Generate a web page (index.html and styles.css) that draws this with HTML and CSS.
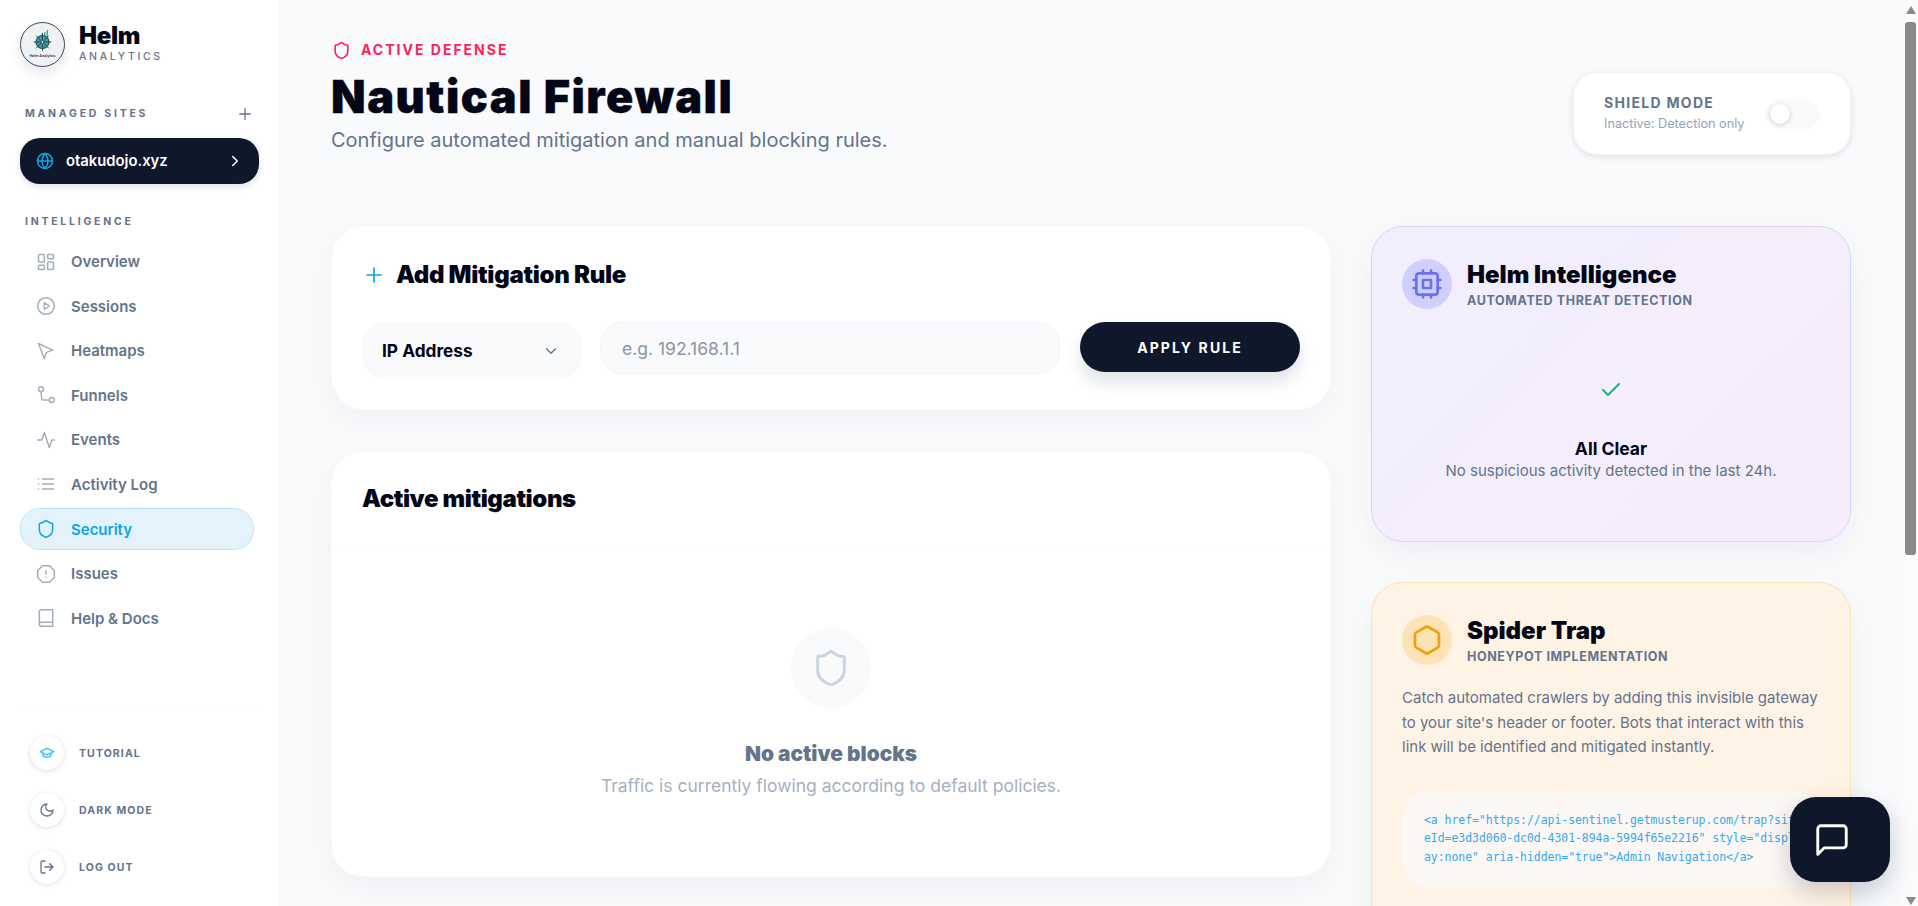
FILE: index.html
```html
<!DOCTYPE html>
<html lang="en">
<head>
<meta charset="utf-8">
<title>Nautical Firewall</title>
<link rel="stylesheet" href="styles.css">
</head>
<body>
<div class="app">
  <aside class="sidebar">
    <div class="brand">
      <div class="logo">
        <svg viewBox="0 0 43 43" width="43" height="43">
          <circle class="wheel-fill" cx="21.500" cy="19" r="7"/>
          <path class="wheel-bars" d="M23 13v-4h1.500v4zM25.500 14V7H27v7zM20.500 12v-2H22v2z"/>
          <g class="wheel-line">
            <circle cx="21.500" cy="19" r="6.500"/>
            <path d="M21.500 10.500v17M13 19h17M15.500 13l12 12M27.500 13l-12 12"/>
          </g>
          <circle class="wheel-hub" cx="21.500" cy="19" r="1.400"/>
          <text x="21.500" y="33.500" class="logo-text">Helm Analytics</text>
        </svg>
      </div>
      <div class="brand-text">
        <div class="brand-name">Helm</div>
        <div class="brand-sub">ANALYTICS</div>
      </div>
    </div>
    <div class="side-head">
      <span class="side-label">MANAGED SITES</span>
      <svg class="plus-icon" viewBox="0 0 24 24"><path d="M5 12h14M12 5v14"/></svg>
    </div>
    <div class="site-pill">
      <svg class="globe" viewBox="0 0 24 24"><circle cx="12" cy="12" r="10"/><path d="M2 12h20M12 2a15.300 15.300 0 0 1 4 10 15.300 15.300 0 0 1-4 10 15.300 15.300 0 0 1-4-10 15.300 15.300 0 0 1 4-10z"/></svg>
      <span class="site-name">otakudojo.xyz</span>
      <svg class="chev" viewBox="0 0 24 24"><path d="m9 18 6-6-6-6"/></svg>
    </div>
    <div class="side-label intel">INTELLIGENCE</div>
    <nav class="nav">
      <a class="nav-item"><svg viewBox="0 0 24 24"><rect x="3" y="3" width="7" height="9" rx="1"/><rect x="14" y="3" width="7" height="5" rx="1"/><rect x="14" y="12" width="7" height="9" rx="1"/><rect x="3" y="16" width="7" height="5" rx="1"/></svg>Overview</a>
      <a class="nav-item"><svg viewBox="0 0 24 24"><circle cx="12" cy="12" r="10"/><path d="m10 8 6 4-6 4z"/></svg>Sessions</a>
      <a class="nav-item"><svg viewBox="0 0 24 24"><path d="M3 3l7 18 2.600-7.400L20 11z"/></svg>Heatmaps</a>
      <a class="nav-item"><svg viewBox="0 0 24 24"><circle cx="6" cy="5" r="3"/><circle cx="19" cy="18" r="3"/><path d="M6 8l1 9a1.500 1.500 0 0 0 1.500 1H16"/></svg>Funnels</a>
      <a class="nav-item"><svg viewBox="0 0 24 24"><path d="M22 12h-3l-3 9-6-18-3 9H2"/></svg>Events</a>
      <a class="nav-item"><svg viewBox="0 0 24 24"><path d="M8 6h13M8 12h13M8 18h13M3 6h.01M3 12h.01M3 18h.01"/></svg>Activity Log</a>
      <a class="nav-item active"><svg viewBox="0 0 24 24"><path d="M20 13c0 5-3.500 7.500-7.660 8.950a1 1 0 0 1-.67-.01C7.500 20.500 4 18 4 13V6a1 1 0 0 1 1-1c2 0 4.500-1.200 6.240-2.720a1.170 1.170 0 0 1 1.520 0C14.510 3.810 17 5 19 5a1 1 0 0 1 1 1z"/></svg>Security</a>
      <a class="nav-item"><svg viewBox="0 0 24 24"><path d="M7.860 2h8.280L22 7.860v8.280L16.140 22H7.860L2 16.140V7.860z"/><path d="M12 8v4M12 16h.01"/></svg>Issues</a>
      <a class="nav-item"><svg viewBox="0 0 24 24"><path d="M4 19.500v-15A2.500 2.500 0 0 1 6.500 2H20v20H6.500a2.500 2.500 0 0 1 0-5H20"/></svg>Help &amp; Docs</a>
    </nav>
    <div class="side-foot">
      <div class="foot-item"><span class="foot-ic tut"><svg viewBox="0 0 24 24"><path d="M22 10 12 5 2 10l10 5zM6 12.500V16c3 3 9 3 12 0v-3.500"/></svg></span>TUTORIAL</div>
      <div class="foot-item"><span class="foot-ic"><svg viewBox="0 0 24 24"><path d="M12 3a6 6 0 0 0 9 9 9 9 0 1 1-9-9z"/></svg></span>DARK MODE</div>
      <div class="foot-item"><span class="foot-ic"><svg viewBox="0 0 24 24"><path d="M9 21H5a2 2 0 0 1-2-2V5a2 2 0 0 1 2-2h4M16 17l5-5-5-5M21 12H9"/></svg></span>LOG OUT</div>
    </div>
  </aside>

  <main class="main">
    <header class="page-head">
      <div class="titles">
        <div class="eyebrow"><svg viewBox="0 0 24 24"><path d="M20 13c0 5-3.500 7.500-7.660 8.950a1 1 0 0 1-.67-.01C7.500 20.500 4 18 4 13V6a1 1 0 0 1 1-1c2 0 4.500-1.200 6.240-2.720a1.170 1.170 0 0 1 1.520 0C14.510 3.810 17 5 19 5a1 1 0 0 1 1 1z"/></svg>ACTIVE DEFENSE</div>
        <h1 class="title">Nautical Firewall</h1>
        <p class="subtitle">Configure automated mitigation and manual blocking rules.</p>
      </div>
      <div class="shield">
        <div>
          <div class="shield-title">SHIELD MODE</div>
          <div class="shield-sub">Inactive: Detection only</div>
        </div>
        <div class="toggle"><span class="knob"></span></div>
      </div>
    </header>

    <div class="columns">
      <div class="col-left">
        <section class="card rule-card">
          <h2 class="card-title"><svg viewBox="0 0 24 24"><path d="M5 12h14M12 5v14"/></svg>Add Mitigation Rule</h2>
          <div class="rule-form">
            <div class="select">IP Address<svg viewBox="0 0 24 24"><path d="m6 9 6 6 6-6"/></svg></div>
            <div class="input">e.g. 192.168.1.1</div>
            <button class="apply">APPLY RULE</button>
          </div>
        </section>
        <section class="card block-card">
          <h2 class="block-head">Active mitigations</h2>
          <div class="empty">
            <div class="empty-ic"><svg viewBox="0 0 24 24"><path d="M20 13c0 5-3.500 7.500-7.660 8.950a1 1 0 0 1-.67-.01C7.500 20.500 4 18 4 13V6a1 1 0 0 1 1-1c2 0 4.500-1.200 6.240-2.720a1.170 1.170 0 0 1 1.520 0C14.510 3.810 17 5 19 5a1 1 0 0 1 1 1z"/></svg></div>
            <div class="empty-title">No active blocks</div>
            <div class="empty-sub">Traffic is currently flowing according to default policies.</div>
          </div>
        </section>
      </div>

      <div class="col-right">
        <section class="panel intel-panel">
          <div class="panel-head">
            <span class="panel-ic intel-ic"><svg viewBox="0 0 24 24"><rect x="4" y="4" width="16" height="16" rx="2"/><rect x="9" y="9" width="6" height="6"/><path d="M15 2v2M15 20v2M2 15h2M2 9h2M20 15h2M20 9h2M9 2v2M9 20v2"/></svg></span>
            <div>
              <div class="panel-title">Helm Intelligence</div>
              <div class="panel-sub">AUTOMATED THREAT DETECTION</div>
            </div>
          </div>
          <div class="clear">
            <span class="clear-ic"><svg viewBox="0 0 24 24"><path d="M20 6 9 17l-5-5"/></svg></span>
            <div class="clear-title">All Clear</div>
            <div class="clear-sub">No suspicious activity detected in the last 24h.</div>
          </div>
        </section>
        <section class="panel trap-panel">
          <div class="panel-head">
            <span class="panel-ic trap-ic"><svg viewBox="0 0 24 24"><path d="M21 16V8a2 2 0 0 0-1-1.730l-7-4a2 2 0 0 0-2 0l-7 4A2 2 0 0 0 3 8v8a2 2 0 0 0 1 1.730l7 4a2 2 0 0 0 2 0l7-4A2 2 0 0 0 21 16z"/></svg></span>
            <div>
              <div class="panel-title">Spider Trap</div>
              <div class="panel-sub">HONEYPOT IMPLEMENTATION</div>
            </div>
          </div>
          <p class="trap-text">Catch automated crawlers by adding this invisible gateway to your site's header or footer. Bots that interact with this link will be identified and mitigated instantly.</p>
          <div class="code"><span class="code-line">&lt;a href="https://api-sentinel.getmusterup.com/trap?sit</span><span class="code-line">eId=e3d3d060-dc0d-4301-894a-5994f65e2216" style="displ</span><span class="code-line">ay:none" aria-hidden="true"&gt;Admin Navigation&lt;/a&gt;</span></div>
        </section>
      </div>
    </div>
  </main>

  <div class="scrollbar">
    <span class="arrow-up"></span>
    <span class="thumb"></span>
    <span class="arrow-down"></span>
  </div>

  <button class="chat"><svg viewBox="0 0 24 24"><path d="M21 15a2 2 0 0 1-2 2H7l-4 4V5a2 2 0 0 1 2-2h14a2 2 0 0 1 2 2z"/></svg></button>
</div>
</body>
</html>
```
FILE: styles.css
```css
* { box-sizing: border-box; }
html, body { margin: 0; height: 100%; overflow: hidden; }
body { font-family: Inter, "Liberation Sans", sans-serif; background: #f8fafc; color: #0f172a; }
svg { fill: none; stroke: currentColor; stroke-width: 2; stroke-linecap: round; stroke-linejoin: round; flex: none; }

.app { display: flex; height: 906px; position: relative; }

.sidebar { width: 280px; flex: none; height: 906px; background: #fff; border-right: 1px solid #f1f5f9; padding: 22px 20px 0; display: flex; flex-direction: column; }
.brand { display: flex; align-items: center; gap: 14px; height: 45px; }
.logo { width: 45px; height: 45px; border-radius: 50%; border: 1px solid #3b4a63; background: #f0f1f2; box-shadow: 0 6px 14px rgba(15,23,42,.1); display: flex; align-items: center; justify-content: center; }
.wheel-fill { fill: #3f9ea3; stroke: none; }
.wheel-bars { fill: #3fb0a8; stroke: none; }
.wheel-line { stroke: #24414f; stroke-width: .9; }
.wheel-hub { fill: #f0f1f2; stroke: #24414f; stroke-width: .7; }
.logo-text { font: 600 3.600px Inter, sans-serif; fill: #24303f; stroke: none; text-anchor: middle; }
.brand-text { margin-top: -2px; }
.brand-name { font-size: 24px; font-weight: 900; line-height: 24px; letter-spacing: -.3px; color: #020617; }
.brand-sub { font-size: 10.500px; line-height: 13px; font-weight: 500; letter-spacing: 2.650px; color: #64748b; margin-top: 2px; }

.side-head { display: flex; justify-content: space-between; align-items: center; margin-top: 38.500px; padding: 0 5px; height: 16px; }
.side-label { font-size: 10.500px; font-weight: 700; letter-spacing: 2.750px; color: #64748b; line-height: 16px; }
.plus-icon { width: 18px; height: 18px; color: #64748b; stroke-width: 1.700; }

.site-pill { margin-top: 16px; height: 46px; border-radius: 20px; background: #0f172a; color: #fff; display: flex; align-items: center; padding: 0 15px 0 16px; box-shadow: 0 3px 6px rgba(15,23,42,.12); }
.globe { width: 18px; height: 18px; color: #0ea5e9; }
.site-name { margin-left: 12px; flex: 1; font-size: 14.800px; font-weight: 600; }
.chev { width: 18px; height: 18px; }

.intel { padding-left: 5px; margin-top: 30.500px; }

.nav { display: flex; flex-direction: column; gap: 2.600px; margin: 10.500px 5px 0 0; }
.nav-item { height: 42px; padding: 0 15px; border: 1px solid transparent; border-radius: 20px; display: flex; align-items: center; gap: 15px; font-size: 15px; font-weight: 600; color: #64748b; }
.nav-item svg { width: 20px; height: 20px; color: #a3aebd; stroke-width: 1.800; }
.nav-item.active { background: #e4f3fb; border-color: #bae6fd; color: #0ea5e9; }
.nav-item.active svg { color: #0ea5e9; }

.side-foot { margin-top: auto; padding: 29px 10px 22px; border-top: 1px solid #f8fafc; display: flex; flex-direction: column; gap: 23px; }
.foot-item { display: flex; align-items: center; gap: 15px; font-size: 10.500px; font-weight: 700; letter-spacing: 1.100px; color: #64748b; height: 34px; }
.foot-ic { width: 34px; height: 34px; border-radius: 50%; background: #fff; box-shadow: 0 1px 5px rgba(15,23,42,.14); display: flex; align-items: center; justify-content: center; }
.foot-ic svg { width: 16px; height: 16px; }
.foot-ic.tut { color: #38bdf8; }

.main { flex: 1; min-width: 0; height: 906px; padding: 40px 50px 0 51px; overflow: hidden; }
.page-head { display: flex; justify-content: space-between; align-items: flex-start; height: 186px; }
.eyebrow { display: flex; align-items: center; gap: 10px; font-size: 14px; font-weight: 700; letter-spacing: 2px; color: #ff1f5a; line-height: 20px; padding-left: 1px; }
.eyebrow svg { width: 19px; height: 19px; }
.title { margin: 10px 0 0; font-size: 45px; line-height: 54px; font-weight: 900; letter-spacing: 1.550px; -webkit-text-stroke: .4px #020617; color: #020617; }
.subtitle { margin: 1.500px 0 0; font-size: 20px; line-height: 28px; color: #64748b; }

.shield { margin-top: 32px; width: 278px; height: 83px; background: #fff; border: 1px solid #f1f5f9; border-radius: 24px; box-shadow: 0 2px 6px rgba(15,23,42,.1); padding: 0 30px; display: flex; align-items: center; justify-content: space-between; }
.shield-title { font-size: 14px; font-weight: 700; letter-spacing: 1.300px; color: #64748b; line-height: 20px; margin-top: -1px; }
.shield-sub { font-size: 12.700px; color: #94a3b8; line-height: 18px; margin-top: 2px; }
.toggle { width: 55px; height: 30px; border-radius: 15px; background: #f8fafc; padding: 5px; }
.knob { display: block; width: 20px; height: 20px; border-radius: 50%; background: #fff; box-shadow: 0 1px 4px rgba(15,23,42,.2); }

.columns { display: flex; gap: 40px; align-items: flex-start; }
.col-left { width: 1000px; flex: none; display: flex; flex-direction: column; gap: 41px; }
.col-right { width: 480px; flex: none; display: flex; flex-direction: column; gap: 40px; }

.card { background: #fff; border-radius: 32px; border: 1px solid #f8fafc; box-shadow: 0 10px 30px rgba(15,23,42,.04); }
.rule-card { height: 184px; padding: 32px 30px 0; }
.card-title { margin: 0; display: flex; align-items: center; gap: 10px; font-size: 24px; line-height: 32px; font-weight: 900; letter-spacing: -.3px; color: #020617; }
.card-title svg { width: 24px; height: 24px; color: #0ea5e9; stroke-width: 1.700; }
.rule-form { display: flex; align-items: flex-start; gap: 18px; margin-top: 31px; }
.select { width: 220px; height: 57px; border-radius: 22px; background: #f8fafc; padding: 0 22px 0 20px; display: flex; align-items: center; justify-content: space-between; font-size: 17.300px; font-weight: 700; color: #020617; }
.select svg { width: 18px; height: 18px; color: #64748b; stroke-width: 1.800; }
.input { flex: 1; height: 52px; border-radius: 22px; background: #f8fafc; border: 1px solid #f1f5f9; padding: 0 21px; display: flex; align-items: center; font-size: 17.500px; color: #8b95a5; }
.apply { width: 220px; height: 50px; margin-left: 2px; border: 0; border-radius: 25px; background: #0f172a; color: #fff; font: 700 14px Inter, sans-serif; letter-spacing: 2.100px; box-shadow: 0 10px 16px rgba(15,23,42,.12); }

.block-card { height: 426px; overflow: hidden; }
.block-head { margin: 0; height: 96px; padding: 31px 30px 0; font-size: 24px; line-height: 32px; font-weight: 900; letter-spacing: -.4px; color: #020617; border-bottom: 1px solid #f8fafc; }
.empty { display: flex; flex-direction: column; align-items: center; padding-top: 80px; }
.empty-ic { width: 80px; height: 80px; border-radius: 50%; background: #f8fafc; display: flex; align-items: center; justify-content: center; }
.empty-ic svg { width: 40px; height: 40px; color: #cbd5e1; stroke-width: 1.800; }
.empty-title { margin-top: 31.500px; font-size: 20.800px; line-height: 28px; font-weight: 900; color: #64748b; }
.empty-sub { margin-top: 6px; font-size: 17.500px; line-height: 24px; color: #a6b0bf; }

.panel { border-radius: 32px; padding: 32px 30px 0; box-shadow: 0 10px 30px rgba(15,23,42,.05); }
.intel-panel { height: 316px; border: 1px solid #d9d4fd; background: linear-gradient(135deg, #f1effe, #f6ecfb); }
.trap-panel { height: 400px; border: 1px solid #fde3b4; background: #fff3e5; }
.panel-head { display: flex; align-items: center; gap: 15px; }
.panel-ic { width: 50px; height: 50px; border-radius: 50%; display: flex; align-items: center; justify-content: center; }
.panel-ic svg { width: 32px; height: 32px; }
.intel-ic { background: #cfd0ff; color: #6b70f3; }
.trap-ic { background: #fee3b6; color: #f59e0b; }
.panel-title { font-size: 24px; line-height: 32px; font-weight: 900; color: #020617; }
.panel-sub { font-size: 12.500px; line-height: 16px; font-weight: 700; letter-spacing: .62px; color: #64748b; margin-top: 1.500px; }

.clear { display: flex; flex-direction: column; align-items: center; padding-top: 48px; }
.clear-ic { width: 66px; height: 66px; border-radius: 50%; background: rgba(255,255,255,.08); display: flex; align-items: center; justify-content: center; }
.clear-ic svg { width: 24px; height: 24px; color: #10b981; }
.clear-title { margin-top: 14px; font-size: 17.500px; line-height: 24px; font-weight: 700; color: #020617; }
.clear-sub { font-size: 15px; line-height: 20px; color: #64748b; }

.trap-text { margin: 21px 0 0; font-size: 15px; line-height: 24.500px; color: #64748b; }
.code { margin-top: 31px; height: 97px; border-radius: 28px; background: #fbf7f4; padding: 20px 22px; font-family: "DejaVu Sans Mono", monospace; font-size: 11.500px; letter-spacing: -.06px; line-height: 18.500px; color: #38a9ec; overflow: hidden; }
.code-line { display: block; white-space: pre; }

.scrollbar { width: 17px; flex: none; height: 906px; background: #fbfbfc; padding: 6px 2px 0 4px; display: flex; flex-direction: column; align-items: center; }
.arrow-up { width: 0; height: 0; border-left: 5.500px solid transparent; border-right: 5.500px solid transparent; border-bottom: 8px solid #8a8a8a; }
.thumb { margin-top: 8px; width: 11px; height: 533px; border-radius: 3px; background: #8a8a8a; }
.arrow-down { margin-top: auto; margin-bottom: 1px; width: 0; height: 0; border-left: 5.500px solid transparent; border-right: 5.500px solid transparent; border-top: 8px solid #8a8a8a; }

.chat { position: absolute; left: 1790px; top: 797px; width: 100px; height: 85px; padding: 0 16px 0 0; border: 0; border-radius: 26px; background: #0f172a; color: #fff; display: flex; align-items: center; justify-content: center; box-shadow: 0 10px 25px rgba(15,23,42,.2); }
.chat svg { width: 38px; height: 38px; stroke-width: 1.800; }
```
